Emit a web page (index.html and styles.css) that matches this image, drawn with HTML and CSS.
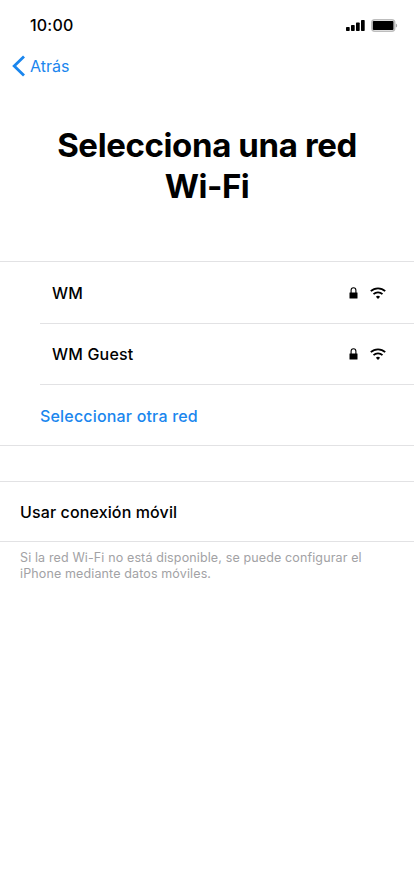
FILE: index.html
```html
<!DOCTYPE html>
<html lang="es">
<head>
<meta charset="utf-8">
<meta name="viewport" content="width=device-width">
<title>Wi-Fi</title>
<link rel="stylesheet" href="styles.css">
</head>
<body>
<svg class="defs" width="0" height="0" aria-hidden="true">
  <symbol id="lock" viewBox="0 0 9 12"><path d="M2.1 6V3.3a2.4 2.6 0 0 1 4.8 0V6" fill="none" stroke="#000" stroke-width="1.1"/><rect x=".5" y="5.4" width="8" height="6.2" rx=".4"/></symbol>
  <symbol id="wifi" viewBox="0 0 16 12"><path d="M.8 4.2a10.4 10.4 0 0 1 14.4 0M3.5 7.2a6.5 6.5 0 0 1 9 0" fill="none" stroke="#000" stroke-width="1.8"/><path d="M5.9 9.7a3.2 3.2 0 0 1 4.2 0L8 11.9z"/></symbol>
</svg>
<header class="status">
  <span class="time">10:00</span>
  <svg class="signal" viewBox="0 0 19 12"><rect y="8" width="3.7" height="4" rx=".7"/><rect x="5" y="6" width="3.7" height="6" rx=".7"/><rect x="10" y="3.5" width="3.7" height="8.5" rx=".7"/><rect x="15" y="1" width="3.7" height="11" rx=".7"/></svg>
  <svg class="battery" viewBox="0 0 27 13"><rect x=".8" y=".8" width="22.9" height="11.4" rx="3" fill="none" stroke="#bdbdbd" stroke-width="1.5"/><rect x="1.8" y="2" width="20.7" height="9" rx="1"/><path d="M24.8 4.4c1.8.6 1.8 3.6 0 4.2z" fill="#aaa"/></svg>
</header>
<nav class="nav"><svg class="chevron" viewBox="0 0 13 22"><path d="M12 1.5 2.2 11l9.8 9.5" fill="none" stroke="#1a86ee" stroke-width="2.8"/></svg><span class="back">Atrás</span></nav>
<h1>Selecciona una red<br><span class="second">Wi-Fi</span></h1>
<main>
  <section class="networks">
    <div class="row network"><span>WM</span><svg class="lock"><use href="#lock"/></svg><svg class="wifi"><use href="#wifi"/></svg></div>
    <div class="row network"><span>WM Guest</span><svg class="lock"><use href="#lock"/></svg><svg class="wifi"><use href="#wifi"/></svg></div>
    <div class="row other"><span>Seleccionar otra red</span></div>
  </section>
  <section class="mobile"><span>Usar conexión móvil</span></section>
  <p class="note">Si la red Wi-Fi no está disponible, se puede configurar el<br><span class="n2">iPhone mediante datos móviles.</span></p>
</main>
</body>
</html>
```
FILE: styles.css
```css
* { box-sizing: border-box; }
body { margin: 0; height: 896px; overflow: hidden; background: #fff; color: #000; font-family: Inter, "Liberation Sans", sans-serif; font-size: 17px; }
.defs { position: absolute; }
.status { height: 50px; padding: 0 16px 0 30px; display: flex; align-items: center; }
.time { flex: 1; font-size: 16px; font-weight: 550; letter-spacing: .2px; }
.signal { width: 19px; height: 12px; margin-right: 6px; }
.battery { width: 27px; height: 13px; }
.nav { height: 32px; padding-left: 12px; display: flex; align-items: center; gap: 5px; color: #1a86ee; font-size: 16px; }
.chevron { width: 13px; height: 22px; }
h1 { height: 179px; margin: 0; padding-top: 43px; text-align: center; font-size: 33px; line-height: 41px; font-weight: 650; letter-spacing: -.38px; }
.second { letter-spacing: -.5px; }
.networks { height: 185px; border: solid #e2e2e4; border-width: 1px 0; }
.row { height: 61px; margin-left: 40px; padding: 0 28px 0 12px; display: flex; align-items: center; border-bottom: 1px solid #e2e2e4; font-size: 16px; font-weight: 450; letter-spacing: .18px; }
.row:first-child { height: 62px; padding-top: 1px; }
.row span { flex: 1; }
.lock { width: 9px; height: 12px; margin-right: 12px; }
.wifi { width: 16px; height: 12px; }
.other { height: 61px; padding: 0; border: 0; color: #1a86ee; }
.mobile { height: 61px; margin-top: 35px; padding-left: 20px; display: flex; align-items: center; border: solid #e2e2e4; border-width: 1px 0; font-size: 16px; font-weight: 450; letter-spacing: .12px; }
.note { margin: 8px 20px; color: #a2a2a5; font-size: 12.5px; line-height: 16px; letter-spacing: .13px; white-space: nowrap; }
```
